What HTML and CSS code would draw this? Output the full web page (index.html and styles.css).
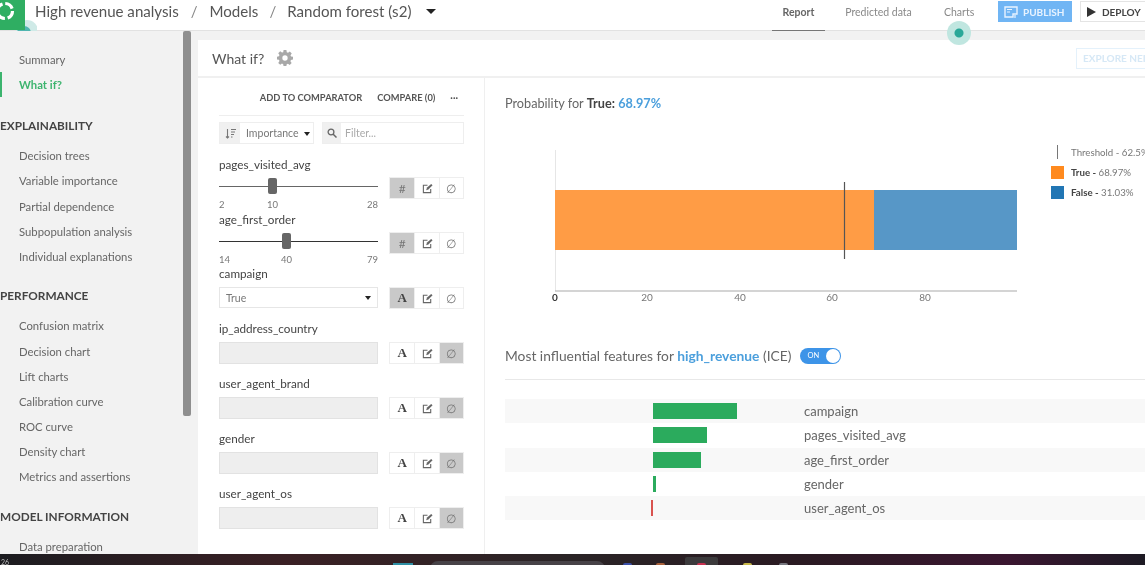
FILE: index.html
```html
<!DOCTYPE html>
<html lang="en">
<head>
<meta charset="utf-8">
<title>What if?</title>
<link rel="stylesheet" href="styles.css">
</head>
<body>
<div class="app">
  <header class="topbar">
    <div class="logo">
      <svg width="37" height="31" viewBox="0 0 37 31"><circle cx="27" cy="31" r="11" fill="#cfeae7"/><circle cx="24" cy="33" r="7" fill="#4fb5b0"/><rect width="25" height="30" fill="#2fae62"/><circle cx="5" cy="11" r="7.5" fill="none" stroke="#fff" stroke-width="3.2" stroke-dasharray="9 2.8"/></svg>
    </div>
    <nav class="crumbs"><span>High revenue analysis</span><i>/</i><span>Models</span><i class="tight">/</i><span>Random forest (s2)</span><b class="caret big"></b></nav>
    <div class="tabs">
      <a class="tab on">Report</a><a class="tab">Predicted data</a><a class="tab">Charts<em class="dot"></em></a>
      <button class="publish"><svg width="14" height="12" viewBox="0 0 14 12"><path d="M1 1h12v7H9v3H1z" fill="none" stroke="#e8f3ff" stroke-width="1.4"/><path d="M3 3.500h5M3 6h3M11 9v3" stroke="#e8f3ff" stroke-width="1.200"/></svg>PUBLISH</button>
      <button class="deploy"><svg width="9" height="10" viewBox="0 0 9 10"><path d="M0 0l9 5-9 5z" fill="#333"/></svg>DEPLOY</button>
    </div>
  </header>
  <div class="main">
    <aside class="side">
      <ul class="nav first"><li>Summary</li><li class="active">What if?</li></ul>
      <h4 class="lead">EXPLAINABILITY</h4>
      <ul class="nav"><li>Decision trees</li><li>Variable importance</li><li>Partial dependence</li><li>Subpopulation analysis</li><li>Individual explanations</li></ul>
      <h4>PERFORMANCE</h4>
      <ul class="nav"><li>Confusion matrix</li><li>Decision chart</li><li>Lift charts</li><li>Calibration curve</li><li>ROC curve</li><li>Density chart</li><li>Metrics and assertions</li></ul>
      <h4>MODEL INFORMATION</h4>
      <ul class="nav"><li>Data preparation</li></ul>
    </aside>
    <div class="scroll"><div class="thumb"></div></div>
    <section class="card">
      <div class="card-head">
        <h2>What if?</h2>
        <svg class="gear" width="16" height="16" viewBox="0 0 18 18"><path fill="#a8a8a8" fill-rule="evenodd" d="M7.400 0h3.200l.4 2.400 1.400.6 2-1.400 2.200 2.200-1.400 2 .6 1.400 2.200.5v3.100l-2.300.4-.6 1.400 1.400 2-2.200 2.200-2-1.400-1.400.6-.4 2.500H7.400L7 15.900l-1.400-.6-2 1.400-2.200-2.200 1.400-2-.6-1.400L0 10.700V7.500l2.200-.4.6-1.400-1.400-2 2.200-2.200 2 1.400L7 2.400zM9 6a3 3 0 100 6 3 3 0 000-6z"/></svg>
        <button class="explore">EXPLORE NEIGHBORHOOD</button>
      </div>
      <div class="card-body">
        <div class="inputs">
          <div class="actions"><span>ADD TO COMPARATOR</span><span>COMPARE (0)</span><span>···</span></div>
          <div class="filters">
            <div class="sort"><span class="addon"><svg width="11" height="11" viewBox="0 0 11 11"><path d="M2.500 1v9M1 8.500l1.500 1.500L4 8.500M6 1.500h5M6 4h4M6 6.500h3M6 9h1.500" fill="none" stroke="#777" stroke-width="1.100"/></svg></span><span class="sortval">Importance<b class="caret"></b></span></div>
            <div class="filter"><span class="addon"><svg width="10" height="10" viewBox="0 0 10 10"><circle cx="4" cy="4" r="2.900" fill="none" stroke="#666" stroke-width="1.300"/><path d="M6 6l3.500 3.500" stroke="#666" stroke-width="1.500"/></svg></span><span class="ph">Filter...</span></div>
          </div>

          <div class="feat slider first">
            <label>pages_visited_avg</label>
            <div class="row">
              <div class="sl"><div class="track"><span class="knob k1"></span></div><div class="ticks t1"><span>2</span><span>10</span><span>28</span></div></div>
              <div class="btns"><span class="sel">#</span><span><svg class="ed" viewBox="0 0 12 12"><use href="#edit"/></svg></span><span class="nul">∅</span></div>
            </div>
          </div>
          <div class="feat slider">
            <label>age_first_order</label>
            <div class="row">
              <div class="sl"><div class="track dark"><span class="knob k2"></span></div><div class="ticks t2"><span>14</span><span>40</span><span>79</span></div></div>
              <div class="btns"><span class="sel">#</span><span><svg class="ed" viewBox="0 0 12 12"><use href="#edit"/></svg></span><span class="nul">∅</span></div>
            </div>
          </div>
          <div class="feat cat">
            <label>campaign</label>
            <div class="row">
              <div class="select">True<b class="caret"></b></div>
              <div class="btns"><span class="sel a">A</span><span><svg class="ed" viewBox="0 0 12 12"><use href="#edit"/></svg></span><span class="nul">∅</span></div>
            </div>
          </div>
          <div class="feat off">
            <label>ip_address_country</label>
            <div class="row"><div class="blank"></div><div class="btns"><span class="a">A</span><span><svg class="ed" viewBox="0 0 12 12"><use href="#edit"/></svg></span><span class="sel nul">∅</span></div></div>
          </div>
          <div class="feat off">
            <label>user_agent_brand</label>
            <div class="row"><div class="blank"></div><div class="btns"><span class="a">A</span><span><svg class="ed" viewBox="0 0 12 12"><use href="#edit"/></svg></span><span class="sel nul">∅</span></div></div>
          </div>
          <div class="feat off">
            <label>gender</label>
            <div class="row"><div class="blank"></div><div class="btns"><span class="a">A</span><span><svg class="ed" viewBox="0 0 12 12"><use href="#edit"/></svg></span><span class="sel nul">∅</span></div></div>
          </div>
          <div class="feat off">
            <label>user_agent_os</label>
            <div class="row"><div class="blank"></div><div class="btns"><span class="a">A</span><span><svg class="ed" viewBox="0 0 12 12"><use href="#edit"/></svg></span><span class="sel nul">∅</span></div></div>
          </div>
        </div>

        <div class="results">
          <p class="prob">Probability for <strong>True:</strong> <strong class="blue">68.97%</strong></p>
          <div class="chart">
            <svg class="plot" width="530" height="170" viewBox="0 0 530 170">
              <path d="M50.500 10v141" stroke="#e6e6e6"/>
              <rect x="50" y="50" width="319" height="60" fill="#ff9c45"/>
              <rect x="369" y="50" width="143" height="60" fill="#5797c7"/>
              <path d="M339.500 42v77" stroke="#555" stroke-width="1.200"/>
              <path d="M50 151h462" stroke="#aaa" stroke-width="1.200"/>
              <g class="axis"><text x="50" y="161" class="zero">0</text><text x="142" y="161">20</text><text x="235" y="161">40</text><text x="327" y="161">60</text><text x="420" y="161">80</text></g>
            </svg>
            <ul class="legend">
              <li><span class="tick"></span>Threshold - 62.5%</li>
              <li><span class="sw orange"></span><strong>True -</strong>&nbsp;68.97%</li>
              <li><span class="sw bluebox"></span><strong>False -</strong>&nbsp;31.03%</li>
            </ul>
          </div>
          <div class="ice-head">
            <span>Most influential features for <strong class="blue">high_revenue</strong> (ICE)</span>
            <span class="toggle"><small>ON</small><i></i></span>
          </div>
          <div class="bars">
            <div class="bar-row"><span></span><span class="pos w84"></span><span class="name">campaign</span></div>
            <div class="bar-row"><span></span><span class="pos w54"></span><span class="name">pages_visited_avg</span></div>
            <div class="bar-row"><span></span><span class="pos w48"></span><span class="name">age_first_order</span></div>
            <div class="bar-row"><span></span><span class="pos w3"></span><span class="name">gender</span></div>
            <div class="bar-row"><span class="neg"></span><span></span><span class="name">user_agent_os</span></div>
          </div>
        </div>
      </div>
    </section>
  </div>
  <footer class="taskbar">
    <span class="tb-left">26</span>
    <span class="tb-win"></span>
    <span class="tb-search"></span>
    <span class="tb-ic c1"></span><span class="tb-ic c2"></span>
    <span class="tb-active"><span class="tb-ic c3"></span></span>
    <span class="tb-ic c4"></span><span class="tb-ic c5"></span>
  </footer>
</div>
<svg class="defs" width="0" height="0"><defs><g id="edit"><path d="M9.500 6.500V10.500H1.500V2.500H6" fill="none" stroke="#666" stroke-width="1.200"/><path d="M4.500 8l1-3L10 1l1.500 1.500-4.500 4.500z" fill="#666"/></g></defs></svg>
</body>
</html>
```
FILE: styles.css
```css
* { box-sizing: border-box; }
html, body { margin: 0; height: 100%; overflow: hidden; }
body { font-family: "Lato", "Noto Sans", sans-serif; font-size: 12px; color: #555; background: #fff; filter: blur(0.4px); }
ul { list-style: none; margin: 0; padding: 0; }
button { font-family: inherit; }
.defs { display: block; height: 0; }
.app { width: 1145px; height: 565px; display: flex; flex-direction: column; overflow: hidden; }

.topbar { height: 30px; flex: none; display: flex; align-items: flex-start; background: #fff; position: relative; z-index: 2; }
.logo { width: 35px; height: 30px; flex: none; overflow: visible; }
.logo svg { display: block; }
.crumbs { display: flex; align-items: center; height: 22px; font-size: 15.100px; color: #555; white-space: nowrap; }
.crumbs i { font-style: normal; color: #888; margin: 0 12px; }
.crumbs i.tight { margin: 0 11px; }
.caret { display: inline-block; width: 0; height: 0; border-left: 3.500px solid transparent; border-right: 3.500px solid transparent; border-top: 4px solid #222; margin-left: 6px; vertical-align: middle; }
.caret.big { border-left-width: 5px; border-right-width: 5px; border-top-width: 5px; margin-left: 15px; }
.tabs { margin-left: auto; display: flex; align-items: flex-start; height: 30px; }
.tab { position: relative; height: 31px; line-height: 24px; margin-right: 20px; font-size: 10.500px; color: #888; text-align: center; }
.tab:nth-child(1) { width: 53px; margin-right: 19px; color: #666; font-weight: 700; border-bottom: 1px solid #777; }
.tab:nth-child(2) { width: 69px; margin-right: 31px; }
.tab:nth-child(3) { width: 30px; margin-right: 24px; }
.dot { position: absolute; left: 3px; top: 21px; width: 24px; height: 24px; border-radius: 50%; background: radial-gradient(circle, #2aa898 0 4px, #c0e6e0 5px); z-index: 3; }
.publish { height: 21px; margin-top: 1px; width: 74px; border: 0; background: #70b5f4; color: #e8f3ff; font-size: 10px; font-weight: 700; display: flex; align-items: center; gap: 5px; padding: 0 0 0 6px; }
.deploy { height: 21px; margin-top: 1px; margin-left: 8px; width: 74px; border: 1px solid #e4e4e4; background: #fff; color: #444; font-size: 10px; font-weight: 700; display: flex; align-items: center; gap: 6px; padding: 0 0 0 6px; flex: none; margin-right: -9px; }

.main { flex: 1; min-height: 0; display: flex; background: #f2f2f2; border-top: 1px solid #e2e2e2; }
.side { width: 183px; flex: none; padding-top: 16px; overflow: hidden; }
.nav li { height: 25.150px; line-height: 25px; padding-left: 19px; font-size: 11.300px; color: #666; white-space: nowrap; }
.nav li.active { color: #3cb46e; font-weight: 700; border-left: 2px solid #3cb46e; padding-left: 17px; }
.side h4 { margin: 14.500px 0 0; height: 25px; line-height: 25px; font-size: 11.800px; font-weight: 700; color: #444; white-space: nowrap; }
.side h4.lead { margin-top: 16px; }
.side h4 + .nav { margin-top: 5px; }
.scroll { width: 8px; flex: none; }
.thumb { height: 385px; background: #8f8f8f; border-radius: 2px; }

.card { flex: none; width: 960px; margin: 9px 0 0 7px; background: #fff; display: flex; flex-direction: column; min-height: 0; }
.card-head { height: 38px; flex: none; border-bottom: 2px solid #f0f0f0; display: flex; align-items: center; padding: 0 0 0 14px; }
.card-head h2 { margin: 0; font-size: 14px; font-weight: 400; color: #555; }
.gear { margin-left: 13px; }
.explore { margin-left: auto; margin-right: -12px; width: 94px; height: 21px; overflow: hidden; white-space: nowrap; border: 1px solid #e4f1fb; background: #fff; color: #d6e8f6; font-size: 10px; font-weight: 700; padding: 0 0 0 6px; text-align: left; }
.card-body { flex: 1; min-height: 0; display: flex; }

.inputs { width: 287px; flex: none; border-right: 1px solid #efefef; padding: 0 20px 0 21px; }
.actions { height: 38px; padding-top: 2px; border-bottom: 1px solid #eee; display: flex; justify-content: flex-end; align-items: center; gap: 15px; padding-right: 6px; font-size: 9.300px; font-weight: 700; color: #555; white-space: nowrap; }
.filters { display: flex; justify-content: space-between; margin-top: 6px; height: 23px; }
.sort, .filter { display: flex; border: 1px solid #eee; height: 22px; font-size: 10.500px; color: #777; }
.sort { width: 95px; }
.filter { width: 142px; }
.addon { width: 20px; background: #f0f0f0; display: flex; align-items: center; justify-content: center; flex: none; }
.filter .addon { width: 18px; }
.sortval { padding-left: 6px; line-height: 20px; white-space: nowrap; }
.ph { padding-left: 4px; line-height: 20px; color: #aaa; }

.feat label { display: block; height: 16px; line-height: 14px; font-size: 11.700px; color: #444; }
.feat .row { display: flex; justify-content: space-between; align-items: flex-start; }
.slider.first { margin-top: 12px; }
.slider { height: 55px; }
.slider .row { margin-top: 4px; }
.cat { height: 55px; margin-top: -1px; }
.off { height: 55px; }
.off label, .cat label { margin-bottom: 5px; }
.sl { width: 159px; }
.track { margin-top: 9px; height: 1px; background: #666; position: relative; }
.track.dark { background: #333; }
.knob { position: absolute; top: -8px; width: 9px; height: 16px; background: #666; border-radius: 2px; }
.k1 { left: 49px; }
.k2 { left: 63px; }
.ticks { margin-top: 12px; position: relative; height: 12px; font-size: 9.500px; color: #777; display: flex; justify-content: space-between; line-height: 12px; }
.t1 span:nth-child(2) { position: absolute; left: 48px; }
.t2 span:nth-child(2) { position: absolute; left: 62px; }
.t1 span:nth-child(1), .t2 span:nth-child(1) { margin-right: auto; }
.btns { display: flex; width: 75px; height: 22px; border: 1px solid #eee; flex: none; }
.btns span { flex: 1; display: flex; align-items: center; justify-content: center; font-size: 12px; color: #777; border-left: 1px solid #eee; }
.btns span:first-child { border-left: 0; flex: 1.050; }
.btns .sel { background: #c9c9c9; }
.btns .a { font-family: "Liberation Serif", serif; font-weight: 700; font-size: 13px; color: #444; }
.ed { width: 11px; height: 11px; }
.select { width: 159px; height: 21px; border: 1px solid #e6e6e6; background: #fff; padding: 0 6px; display: flex; align-items: center; justify-content: space-between; font-size: 10.500px; color: #777; }
.blank { width: 159px; height: 22px; background: #eee; border: 1px solid #e2e2e2; }

.results { flex: 1; min-width: 0; padding-left: 20px; }
.prob { margin: 17px 0 0; height: 17px; line-height: 16px; font-size: 12.700px; color: #666; }
.prob strong { color: #444; }
.prob strong.blue, .blue { color: #4b9fdc; font-weight: 700; }
.chart { display: flex; height: 233px; align-items: flex-start; }
.plot { display: block; margin-top: 28px; flex: none; }
.plot text { font-size: 10px; fill: #777; text-anchor: middle; font-family: "Lato", "Noto Sans", sans-serif; }
.plot text.zero { fill: #333; font-weight: 700; }
.legend { margin: 30px 0 0 16px; font-size: 9.700px; color: #777; white-space: nowrap; }
.legend li { height: 20px; display: flex; align-items: center; }
.legend strong { color: #444; }
.tick { width: 13px; margin-right: 7px; height: 14px; background: linear-gradient(#777, #777) no-repeat center / 1px 100%; }
.sw { width: 13px; height: 13px; margin-right: 7px; }
.orange { background: #ff8a1e; }
.bluebox { background: #2276b4; }
.ice-head { height: 35px; padding-top: 1px; border-bottom: 1px solid #e8e8e8; display: flex; align-items: flex-start; gap: 9px; font-size: 13.800px; color: #666; width: 640px; }
.ice-head > span:first-child { line-height: 20px; }
.ice-head strong { font-weight: 700; }
.toggle { width: 41px; height: 16px; border-radius: 8px; background: #3d94e8; position: relative; margin-top: 2px; color: #fff; }
.toggle small { position: absolute; left: 7px; top: 2px; font-size: 7.500px; line-height: 11px; }
.toggle i { position: absolute; right: 1px; top: 1px; width: 14px; height: 14px; border-radius: 50%; background: #fff; }
.bars { margin-top: 19px; width: 640px; }
.bar-row { height: 24.250px; display: grid; grid-template-columns: 148px 151px 1fr; align-items: center; }
.bar-row:nth-child(odd) { background: #f8f8f8; }
.pos { height: 16px; background: #2bab5d; display: block; }
.neg { height: 16px; width: 2px; background: #d9534f; justify-self: end; }
.w84 { width: 84px; }
.w54 { width: 54px; }
.w48 { width: 48px; }
.w3 { width: 3px; }
.name { font-size: 13px; color: #666; line-height: 16px; }

.taskbar { height: 11px; flex: none; position: relative; z-index: 4; background: linear-gradient(90deg, #1c1c20 0, #3a2024 25%, #2a2426 50%, #2a1a22 70%, #3a1630 88%, #1d1a24 100%); display: flex; align-items: flex-start; overflow: hidden; }
.tb-left { color: #bbb; font-size: 7px; line-height: 16px; margin-left: 1px; width: 392px; flex: none; }
.tb-win { width: 20px; height: 3px; margin-top: 9px; background: #2e8fa4; flex: none; }
.tb-search { width: 175px; height: 8px; margin: 7px 18px 0 17px; border-radius: 8px 8px 0 0; background: #474247; flex: none; }
.tb-ic { width: 9px; height: 3px; margin-top: 9px; border-radius: 2px 2px 0 0; flex: none; }
.c1 { background: #3a4fa8; margin-right: 24px; }
.c2 { background: #a8603a; margin-right: 20px; }
.tb-active { width: 33px; height: 8px; margin: 3px 25px 0 0; background: #3c3a3c; border-radius: 2px 2px 0 0; display: flex; justify-content: center; flex: none; }
.c3 { background: #c83050; margin-top: 6px; }
.c4 { background: #c8b848; margin-right: 27px; }
.c5 { background: #77777f; }
```
